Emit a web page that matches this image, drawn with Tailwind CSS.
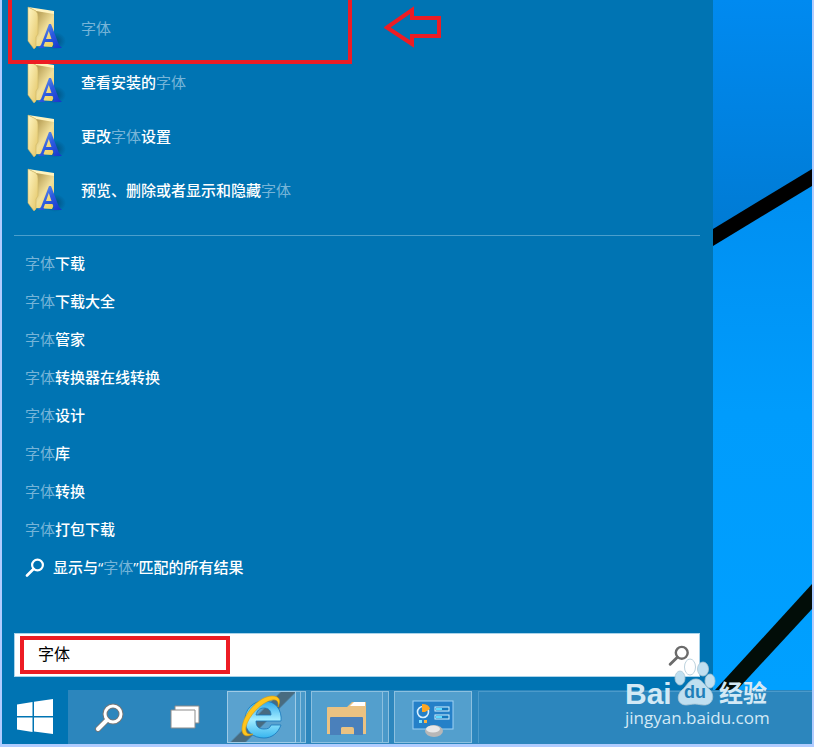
<!DOCTYPE html>
<html lang="zh-CN">
<head>
  <meta charset="UTF-8">
  <title>搜索 - 字体</title>
  <meta name="viewport" content="width=device-width, initial-scale=1.0">
  <script src="https://cdn.jsdelivr.net/npm/@tailwindcss/browser@4"></script>
</head>
<body class="min-h-screen flex flex-col border-x-2 border-b-3 border-[#b0ccff] bg-[#0074b3] text-white text-[15px] leading-5 font-['Noto_Sans_CJK_SC','Open_Sans',sans-serif] overflow-hidden">

  <!-- Shared icons -->
  <svg class="absolute w-0 h-0" aria-hidden="true">
    <defs>
      <linearGradient id="flap" x1="0" y1="0" x2="1" y2="1">
        <stop offset="0" stop-color="#fff6c4"/>
        <stop offset="1" stop-color="#e3c565"/>
      </linearGradient>
      <linearGradient id="back" x1="0" y1="0" x2="1" y2="1">
        <stop offset="0" stop-color="#8f7838"/>
        <stop offset="0.35" stop-color="#c9b269"/>
        <stop offset="0.6" stop-color="#f0df9a"/>
        <stop offset="1" stop-color="#f2cf52"/>
      </linearGradient>
      <linearGradient id="letter" x1="0" y1="0" x2="1" y2="1">
        <stop offset="0" stop-color="#7ba4f0"/>
        <stop offset="0.5" stop-color="#2c5be0"/>
        <stop offset="1" stop-color="#1734c8"/>
      </linearGradient>
      <radialGradient id="shade">
        <stop offset="0" stop-color="#033e66" stop-opacity="0.7"/>
        <stop offset="1" stop-color="#033e66" stop-opacity="0"/>
      </radialGradient>
    </defs>
    <symbol id="font-folder" viewBox="0 0 40 44">
      <ellipse cx="29" cy="35" rx="11" ry="9" fill="url(#shade)"/>
      <path d="M2 2 28 6V37L26 41 9 40Z" fill="url(#back)"/>
      <path d="M2 1 28 5V8L10 5Z" fill="#fff3bd"/>
      <path d="M2 1 10 5Q12 7 12 11V28L10 31V41L8 43 2 35Z" fill="url(#flap)" stroke="#cfb563" stroke-width="0.6"/>
      <path d="M23 18H25L33 39 36 42H26L28 40 26.500 36H19L17.500 40 19 42H12L15 39ZM22.800 25 20 33H25.500Z" fill="url(#letter)" fill-rule="evenodd"/>
    </symbol>
    <symbol id="magnifier" viewBox="0 0 20 20">
      <circle cx="12.500" cy="8" r="5.400" fill="none" stroke="currentColor" stroke-width="2.200"/>
      <path d="M8.500 12 2 18.500" stroke="currentColor" stroke-width="2.600" stroke-linecap="round"/>
    </symbol>
  </svg>

  <div class="flex-1 flex">
    <!-- Search panel -->
    <main class="relative flex-1 flex flex-col pl-3 pr-[13px] pb-[13px] font-medium">
      <ul>
        <li><a href="#" class="flex items-center h-[54px] pt-[2px] pl-3 gap-[15px]"><svg class="w-10 h-11"><use href="#font-folder"/></svg><span><span class="font-normal text-[#76b4d8]">字体</span></span></a></li>
        <li><a href="#" class="flex items-center h-[54px] pt-[2px] pl-3 gap-[15px]"><svg class="w-10 h-11"><use href="#font-folder"/></svg><span>查看安装的<span class="font-normal text-[#76b4d8]">字体</span></span></a></li>
        <li><a href="#" class="flex items-center h-[54px] pt-[2px] pl-3 gap-[15px]"><svg class="w-10 h-11"><use href="#font-folder"/></svg><span>更改<span class="font-normal text-[#76b4d8]">字体</span>设置</span></a></li>
        <li><a href="#" class="flex items-center h-[54px] pt-[2px] pl-3 gap-[15px]"><svg class="w-10 h-11"><use href="#font-folder"/></svg><span>预览、删除或者显示和隐藏<span class="font-normal text-[#76b4d8]">字体</span></span></a></li>
      </ul>

      <hr class="mt-[19px] mb-2 border-[#4b9fcc]">

      <ul class="pl-[11px]">
        <li><a href="#" class="flex items-center h-[38px]"><span class="font-normal text-[#76b4d8]">字体</span>下载</a></li>
        <li><a href="#" class="flex items-center h-[38px]"><span class="font-normal text-[#76b4d8]">字体</span>下载大全</a></li>
        <li><a href="#" class="flex items-center h-[38px]"><span class="font-normal text-[#76b4d8]">字体</span>管家</a></li>
        <li><a href="#" class="flex items-center h-[38px]"><span class="font-normal text-[#76b4d8]">字体</span>转换器在线转换</a></li>
        <li><a href="#" class="flex items-center h-[38px]"><span class="font-normal text-[#76b4d8]">字体</span>设计</a></li>
        <li><a href="#" class="flex items-center h-[38px]"><span class="font-normal text-[#76b4d8]">字体</span>库</a></li>
        <li><a href="#" class="flex items-center h-[38px]"><span class="font-normal text-[#76b4d8]">字体</span>转换</a></li>
        <li><a href="#" class="flex items-center h-[38px]"><span class="font-normal text-[#76b4d8]">字体</span>打包下载</a></li>
        <li><a href="#" class="flex items-center h-[38px]"><svg class="w-5 h-5 mr-2"><use href="#magnifier"/></svg><span class="font-['Open_Sans','Noto_Sans_CJK_SC',sans-serif]">显示与“<span class="font-normal text-[#76b4d8]">字体</span>”匹配的所有结果</span></a></li>
      </ul>

      <form class="relative mt-auto flex items-center h-11 bg-white border border-[#a9d3ea] text-[#6b6b6b]">
        <input type="text" value="字体" aria-label="搜索" class="flex-1 h-full pl-[23px] pb-1 text-base font-normal text-black outline-none">
        <button type="button" aria-label="搜索" class="mr-[9px]"><svg class="w-[22px] h-[22px]"><use href="#magnifier"/></svg></button>
        <div class="absolute left-[5px] top-[2px] w-[210px] h-[38px] border-4 border-[#ed1c24] pointer-events-none"></div>
      </form>

      <!-- Red marks -->
      <div class="absolute left-[6px] top-0 w-[344px] h-16 border-4 border-t-0 border-[#ed1c24] pointer-events-none"></div>
      <svg class="absolute left-[382px] top-[6px] w-[60px] h-[44px]" viewBox="0 0 60 44" fill="none" stroke="#ed1c24" stroke-width="4">
        <path d="M3 21.500 28 4V12H55V30H28V38Z"/>
      </svg>
    </main>

    <!-- Wallpaper -->
    <svg class="w-[99px] shrink-0 self-stretch" viewBox="0 0 99 690" preserveAspectRatio="none">
      <defs>
        <linearGradient id="sky" x1="0" y1="0" x2="0" y2="1">
          <stop offset="0" stop-color="#008af0"/>
          <stop offset="1" stop-color="#007bd4"/>
        </linearGradient>
        <linearGradient id="pane" x1="0" y1="0" x2="0" y2="1">
          <stop offset="0" stop-color="#008bea"/>
          <stop offset="0.3" stop-color="#0090f2"/>
          <stop offset="0.6" stop-color="#009cfc"/>
          <stop offset="1" stop-color="#00a0ff"/>
        </linearGradient>
      </defs>
      <rect width="99" height="690" fill="url(#pane)"/>
      <path d="M0 0H99V170L0 230Z" fill="url(#sky)"/>
      <path d="M0 229 99 169V186L0 246Z" fill="#000"/>
      <path d="M99 584V609L24 690H2Z" fill="#020d08"/>
    </svg>
  </div>

  <!-- Taskbar -->
  <footer class="relative flex h-[54px] bg-[#2c86bd]">
    <button class="w-[66px] bg-[#0074b3] flex items-center justify-center" aria-label="开始">
      <svg class="w-9 h-9" viewBox="0 0 36 36" fill="#fff">
        <path d="M0 5.500 15.500 3V17H0ZM17 2.800 36 0V17H17ZM0 18.500H15.500V33L0 30.500ZM17 18.500H36V35L17 32.500Z"/>
      </svg>
    </button>
    <button class="w-[82px] flex items-center justify-center" aria-label="搜索">
      <svg class="w-8 h-8" viewBox="0 0 32 32" fill="none">
        <g stroke="#777" stroke-linecap="round">
          <circle cx="20" cy="13" r="8" stroke-width="5"/>
          <path d="M14 19 5 28" stroke-width="6"/>
        </g>
        <g stroke="#fff" stroke-linecap="round">
          <circle cx="20" cy="13" r="8" stroke-width="3"/>
          <path d="M14 19 5 28" stroke-width="4"/>
        </g>
      </svg>
    </button>
    <button class="w-[70px] flex items-center justify-center" aria-label="任务视图">
      <svg class="w-8 h-6" viewBox="0 0 32 24" fill="#fff" stroke="#8b8b8b">
        <path d="M6 1H30V18H6Z"/>
        <path d="M2 5H26V23H2Z"/>
      </svg>
    </button>
    <button class="ml-[7px] my-px w-[69px] flex items-center justify-center border border-[#9fcbe6] bg-[linear-gradient(135deg,#5aa2cf_0_44%,#486b80_46%_57%,#5aa2cf_59%)]" aria-label="Internet Explorer">
      <svg class="w-12 h-12" viewBox="0 0 48 48" fill="none">
        <defs>
          <linearGradient id="ie" x1="0" y1="0" x2="0" y2="1">
            <stop offset="0" stop-color="#2ba8ec"/>
            <stop offset="0.5" stop-color="#a2ecff"/>
            <stop offset="1" stop-color="#36b4ee"/>
          </linearGradient>
        </defs>
        <path d="M43 28H18C18 34 21 36 26 36 30 36 32 35 33 32H43C40 40 34 45 26 45 15 45 7 38 7 27 7 16 15 8 26 8 38 8 44 17 43 28ZM18 22H33C33 17 30 15 26 15 21 15 19 18 18 22Z" fill="url(#ie)" stroke="#1676bb" stroke-width="0.800"/>
        <path d="M40 14C43 8 42 3 34 3 21 3 4 22 4 36 4 44 10 44 15 41 10 42 7 40 8 34 10 23 24 9 34 7 39 6 41 9 40 14Z" fill="#ffc51c" stroke="#d99a0c" stroke-width="0.600"/>
      </svg>
    </button>
    <div class="my-px w-[5px] border border-l-0 border-[#8cc0df] bg-[#4a99c9]"></div>
    <div class="my-px w-[5px] border border-l-0 border-[#8cc0df] bg-[#4a99c9]"></div>
    <button class="ml-[5px] my-px w-[72px] flex items-center justify-center border border-[#8cc0df] bg-[#539fcd]" aria-label="文件资源管理器">
      <svg class="w-10 h-9 mt-1" viewBox="0 0 40 36">
        <path d="M0 7Q0 6 1 6H20L25 1H39V33H0Z" fill="#eac282"/>
        <path d="M23 5 27 1H38V5Z" fill="#fff"/>
        <path d="M3 17Q3 16 4 16H35Q36 16 36 17V34H27V28Q27 26 25 26H16Q14 26 14 28V34H3Z" fill="#4a80bb"/>
        <path d="M14 28Q14 26 16 26H24L26 28V33H14Z" fill="#eac282"/>
      </svg>
    </button>
    <div class="my-px w-[6px] border border-l-0 border-[#8cc0df] bg-[#4a99c9]"></div>
    <button class="ml-[5px] my-px w-[78px] flex items-center justify-center border border-[#8cc0df] bg-[#539fcd]" aria-label="控制面板">
      <svg class="w-[42px] h-[38px] mt-1" viewBox="0 0 42 38">
        <rect x="1" y="1" width="40" height="28" fill="#2580c8" stroke="#9ed2f5"/>
        <circle cx="11" cy="12" r="5.500" fill="none" stroke="#d9f0ff" stroke-width="1.600"/>
        <path d="M10 12V4Q17 4 18 9L13 12Z" fill="#ffa722"/>
        <rect x="23" y="7" width="14" height="4" fill="#1277bd" stroke="#d4f3ff"/>
        <rect x="24" y="8" width="6" height="2" fill="#5edcff"/>
        <rect x="23" y="15" width="14" height="4" fill="#1277bd" stroke="#d4f3ff"/>
        <rect x="24" y="16" width="6" height="2" fill="#5edcff"/>
        <rect x="7" y="20" width="3" height="3" fill="#7ee4ff"/>
        <rect x="12" y="20" width="3" height="3" fill="#ffb13a"/>
        <ellipse cx="22" cy="31" rx="9" ry="6" fill="#b7b7b7"/>
        <ellipse cx="21" cy="29" rx="7" ry="3.500" fill="#e8e8e8"/>
      </svg>
    </button>
    <div class="ml-[6px] my-px flex-1 border-l border-t border-[#4b9aca]"></div>

    <!-- Site watermark -->
    <div class="absolute right-[39px] -top-8 w-[148px] text-[#d3e9f5] font-['Liberation_Sans','Noto_Sans_CJK_SC',sans-serif]">
      <div class="flex items-end h-12 font-bold">
        <span class="w-[49px] text-[30px] leading-6">Bai</span>
        <div class="relative w-[42px] h-12">
          <svg class="w-full h-full" viewBox="49 0 42 48" fill="#bfdff0" stroke="#a9c5d3" stroke-width="0.800">
            <ellipse cx="55" cy="20" rx="5" ry="7"/>
            <ellipse cx="65" cy="9" rx="5.500" ry="8" fill="#ffffff" fill-opacity="0.700"/>
            <ellipse cx="78" cy="11" rx="5.500" ry="7"/>
            <ellipse cx="85" cy="23" rx="5" ry="7"/>
            <path d="M71 21C77 21 79 27 84 31 90 36 89 47 79 47 75 47 73 46 70 46 66 46 64 47 61 47 52 47 51 37 57 32 62 28 64 21 71 21Z"/>
          </svg>
          <span class="absolute inset-x-0 bottom-1 text-center text-lg leading-5 text-[#1f7fb9]">du</span>
        </div>
        <span class="ml-[3px] text-2xl leading-6">经验</span>
      </div>
      <p class="font-['Open_Sans',sans-serif] text-[17px] leading-6">jingyan.baidu.com</p>
    </div>
  </footer>

</body>
</html>
